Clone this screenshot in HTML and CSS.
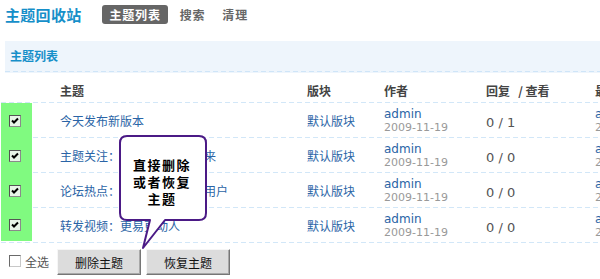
FILE: index.html
```html
<!DOCTYPE html>
<html lang="zh-CN">

<head>
    <meta charset="UTF-8">
    <title>主题回收站</title>
    <link rel="stylesheet" href="styles.css">
</head>

<body>
    <div class="page">
        <div class="topbar">
            <h1 class="title">主题回收站</h1>
            <ul class="tabs">
                <li class="active">主题列表</li>
                <li>搜索</li>
                <li>清理</li>
            </ul>
        </div>

        <div class="band">主题列表</div>

        <div class="list">
            <div class="row head">
                <div></div>
                <div class="topic">主题</div>
                <div>版块</div>
                <div>作者</div>
                <div>回复&nbsp;&nbsp;&nbsp;/&nbsp;查看</div>
                <div>最后发表</div>
            </div>
            <div class="row">
                <div class="check"><span class="box on"></span></div>
                <div class="topic"><a>今天发布新版本</a></div>
                <div><a>默认版块</a></div>
                <div class="author"><a>admin</a><span>2009-11-19</span></div>
                <div class="count">0 / 1</div>
                <div class="author"><a>admin</a><span>2009-11-19</span></div>
            </div>
            <div class="row">
                <div class="check"><span class="box on"></span></div>
                <div class="topic"><a>主题关注：让你的论坛火起来</a></div>
                <div><a>默认版块</a></div>
                <div class="author"><a>admin</a><span>2009-11-19</span></div>
                <div class="count">0 / 0</div>
                <div class="author"><a>admin</a><span>2009-11-19</span></div>
            </div>
            <div class="row">
                <div class="check"><span class="box on"></span></div>
                <div class="topic"><a>论坛热点：如何吸引更多新用户</a></div>
                <div><a>默认版块</a></div>
                <div class="author"><a>admin</a><span>2009-11-19</span></div>
                <div class="count">0 / 0</div>
                <div class="author"><a>admin</a><span>2009-11-19</span></div>
            </div>
            <div class="row">
                <div class="check"><span class="box on"></span></div>
                <div class="topic"><a>转发视频：更易更动人</a></div>
                <div><a>默认版块</a></div>
                <div class="author"><a>admin</a><span>2009-11-19</span></div>
                <div class="count">0 / 0</div>
                <div class="author"><a>admin</a><span>2009-11-19</span></div>
            </div>
        </div>

        <div class="actions">
            <label class="all"><span class="box"></span>全选</label>
            <button>删除主题</button>
            <button>恢复主题</button>
        </div>

        <!-- callout over the list -->
        <div class="tip">
            <svg width="94" height="118" viewBox="0 0 94 118">
                <path d="M10,3 H82 Q89,3 89,10 V80 Q89,87 82,87 H48 L26,115 L33,87 H10 Q3,87 3,80 V10 Q3,3 10,3 Z"
                      fill="#fff" stroke="#4b1a86" stroke-width="2" stroke-linejoin="round"/>
            </svg>
            <div class="tip-text">直接删除<br>或者恢复<br>主题</div>
        </div>
    </div>
</body>
</html>
```

FILE: styles.css
```css
body {
    margin: 0;
    background: #fff;
    font-family: "Noto Sans CJK SC", sans-serif;
    font-size: 12px;
}

.page {
    position: relative;
    width: 600px;
    height: 279px;
    overflow: hidden;
}

.topbar {
    display: flex;
    align-items: center;
    padding: 5px 0 0 5px;
    height: 19px;
}

.title {
    margin: 0 20px 0 0;
    font-size: 15px;
    line-height: 19px;
    color: #168fc9;
    letter-spacing: 0.3px;
}

.tabs {
    display: flex;
    gap: 2px;
    margin: 0;
    padding: 0;
    list-style: none;
}

.tabs li {
    padding: 0 7px 0 8px;
    line-height: 19px;
    font-weight: bold;
    letter-spacing: 0.8px;
    color: #666;
    border-radius: 3px;
}

.tabs li.active {
    background: #666;
    color: #fff;
    margin-right: 2px;
}

.band {
    margin: 17px 0 0 5px;
    padding-left: 5px;
    height: 31px;
    line-height: 30px;
    font-weight: bold;
    color: #168fc9;
    background: #eef5fc repeating-linear-gradient(to right, #cfe5f8 0 5px, transparent 5px 8px) left bottom / 100% 1px no-repeat;
    border-bottom: 1px solid transparent;
}

.list {
    margin: 7px 0 0 1px;
    width: 700px;
}

.row {
    display: grid;
    grid-template-columns: 31px 275px 77px 102px 109px 100px;
    align-items: center;
    height: 35px;
    background: repeating-linear-gradient(to right, #d2e7f8 0 5px, transparent 5px 8px) left bottom / 100% 1px no-repeat;
}

.row.head {
    height: 23px;
    font-weight: bold;
    color: #444;
    line-height: 16px;
}

.row.head div {
    padding-bottom: 2px;
}

.topic {
    padding-left: 28px;
}

.row a {
    color: #2a64a6;
    text-decoration: none;
    line-height: 16px;
}

.check {
    align-self: stretch;
    display: flex;
    align-items: center;
    padding-left: 8px;
    background: #80fa80;
}

.row:last-child .check {
    margin-bottom: 2px;
}

.box {
    display: inline-block;
    box-sizing: border-box;
    width: 12px;
    height: 12px;
    border: 1px solid;
    border-color: #6a6a6a #c8c8c8 #c8c8c8 #6a6a6a;
    background: #fff;
}

.box.on {
    border-color: #555 #8a8a8a #8a8a8a #555;
    background: #e8f4e8 url("data:image/svg+xml,%3Csvg xmlns='http://www.w3.org/2000/svg' width='10' height='10'%3E%3Cpath d='M2 4.5 L4 6.5 L8 2.5' fill='none' stroke='%23000' stroke-width='2'/%3E%3C/svg%3E") center / 10px 10px no-repeat;
}

.author {
    display: flex;
    flex-direction: column;
    font-family: "DejaVu Sans", sans-serif;
}

.author a {
    font-size: 12px;
    line-height: 14px;
}

.author span {
    font-size: 11px;
    line-height: 13px;
    color: #999;
}

.count {
    font-family: "DejaVu Sans", sans-serif;
    font-size: 13px;
    color: #555;
    padding-top: 4px;
}

.actions {
    display: flex;
    align-items: center;
    padding: 6px 0 0 9px;
}

.all {
    display: flex;
    align-items: center;
    gap: 4px;
    color: #555;
    margin-right: 8px;
    margin-top: -2px;
}

.actions button {
    width: 84px;
    height: 26px;
    margin-right: 5px;
    padding: 0;
    font-family: "Noto Sans CJK SC", sans-serif;
    font-size: 12px;
    color: #111;
    background: #dcdcdc;
    border: 1px solid;
    border-color: #f6f6f6 #767676 #767676 #f6f6f6;
    box-shadow: inset -1px -1px 0 #a8a8a8;
}

.tip {
    position: absolute;
    left: 117px;
    top: 133px;
    width: 94px;
    height: 118px;
}

.tip svg {
    display: block;
}

.tip-text {
    position: absolute;
    left: 2px;
    top: 23px;
    width: 86px;
    text-align: center;
    font-size: 13px;
    line-height: 17px;
    font-weight: bold;
    letter-spacing: 1.5px;
    color: #000;
}
```
